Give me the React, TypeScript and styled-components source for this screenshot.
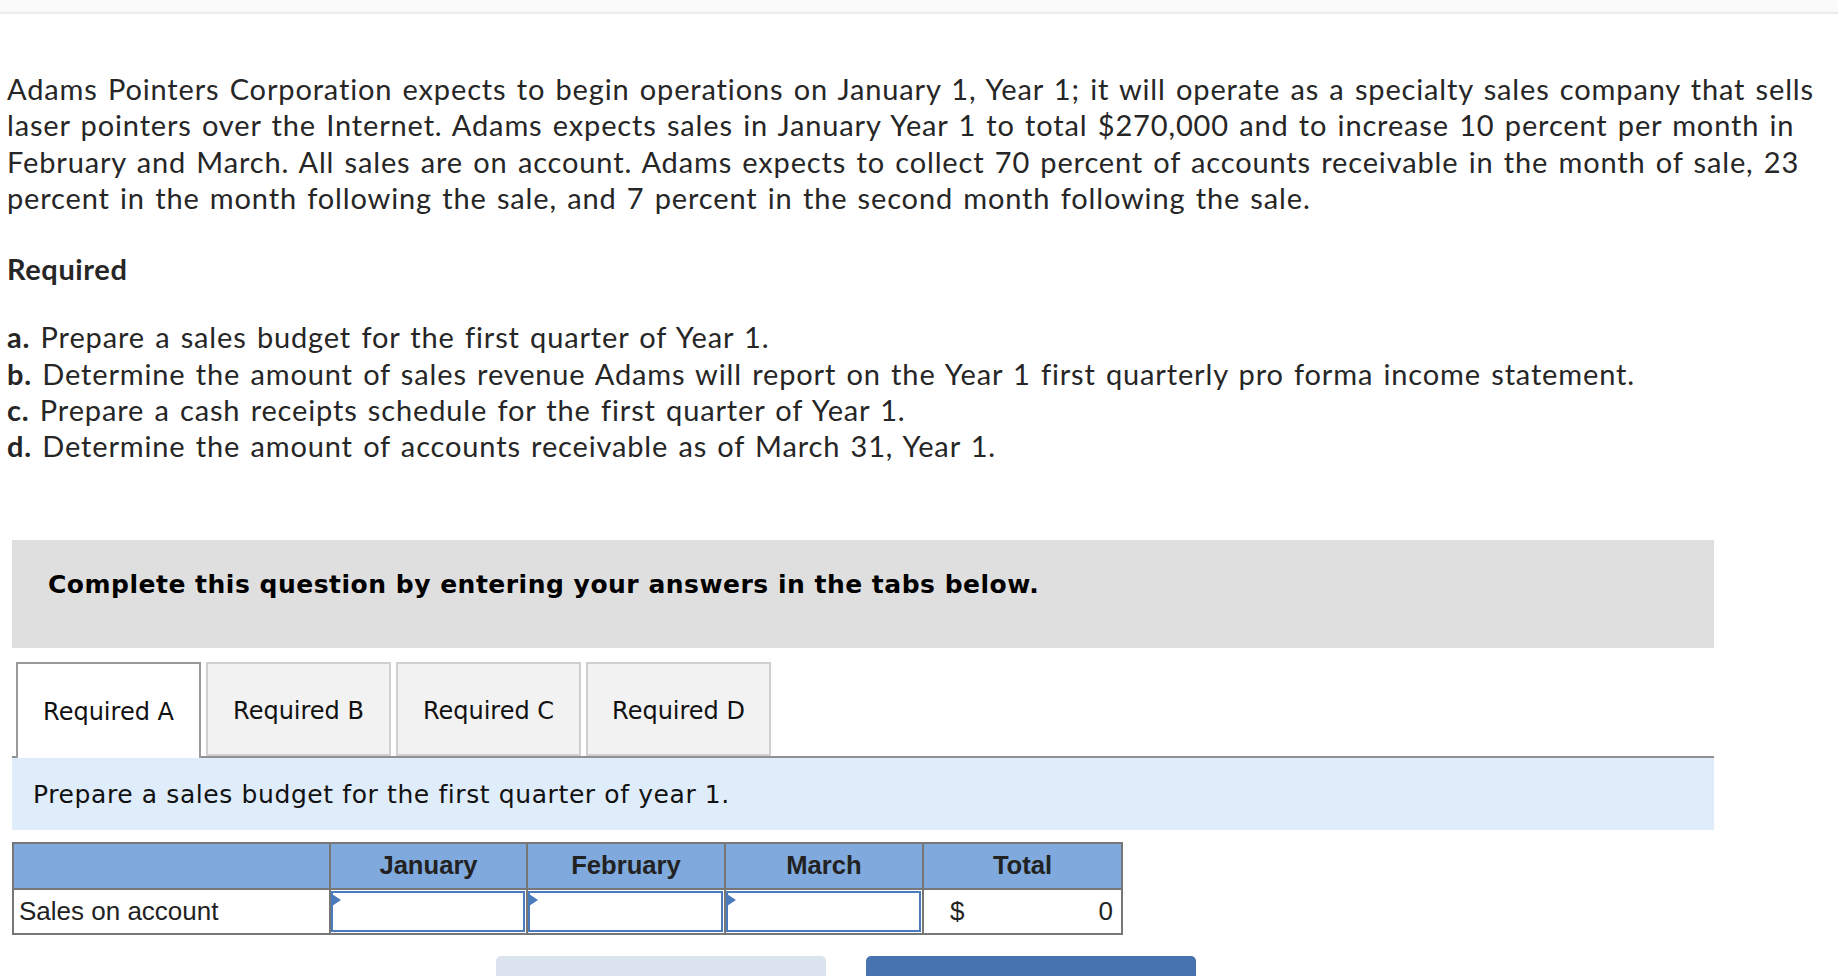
import React from "react"
import styled, { createGlobalStyle } from "styled-components"

const GlobalStyle = createGlobalStyle`
  body {
    margin: 0;
    background: #fff;
  }
`

const TopBar = styled.div`
  height: 12px;
  background: #fafafa;
  border-bottom: 2px solid #ececec;
`

const Question = styled.div`
  padding: 57px 0 0 7px;
  font-family: Lato, "Open Sans", sans-serif;
  font-size: 29px;
  letter-spacing: 0.85px;
  word-spacing: 2px;
  line-height: 36.3px;
  color: #262626;
`

const Intro = styled.p`
  margin: 0;
`

const RequiredTitle = styled.h3`
  margin: 35px 0 0;
  font-size: inherit;
  font-weight: 700;
  letter-spacing: 0.6px;
`

const TaskList = styled.ol`
  margin: 32px 0 0;
  padding: 0;
  list-style: none;
`

const Letter = styled.b`
  font-weight: 700;
`

const Work = styled.div`
  margin: 75px 0 0 12px;
  width: 1702px;
`

const Instructions = styled.div`
  height: 108px;
  box-sizing: border-box;
  background: #dfdfdf;
  padding: 30px 0 0 36px;
  line-height: 30px;
  font-family: "DejaVu Sans", Verdana, sans-serif;
  font-weight: 700;
  font-size: 25px;
  letter-spacing: 0.5px;
  color: #000;
`

const TabStrip = styled.div`
  margin-top: 14px;
  padding-left: 4px;
  display: flex;
  gap: 5px;
  border-bottom: 2px solid #909090;
  height: 94px;
`

const Tab = styled.button<{ $active?: boolean }>`
  width: 185px;
  height: ${p => (p.$active ? "96px" : "94px")};
  box-sizing: border-box;
  border: 2px solid ${p => (p.$active ? "#999" : "#cfcfcf")};
  border-bottom: ${p => (p.$active ? "none" : "2px solid #cfcfcf")};
  background: ${p => (p.$active ? "#fff" : "#f2f2f2")};
  font-family: "DejaVu Sans", Verdana, sans-serif;
  font-size: 24px;
  color: #111;
  padding: 4px 0 ${p => (p.$active ? "2px" : "0")};
  position: relative;
  z-index: ${p => (p.$active ? 1 : 0)};
`

const Panel = styled.div`
  height: 72px;
  box-sizing: border-box;
  background: #dfecf9;
  padding: 2px 0 0 21px;
  display: flex;
  align-items: center;
  font-family: "DejaVu Sans", Verdana, sans-serif;
  font-size: 25px;
  letter-spacing: 0.6px;
  color: #111;
`

const Grid = styled.div`
  margin-top: 12px;
  width: 1111px;
  box-sizing: border-box;
  display: grid;
  grid-template-columns: 315px 195px 196px 196px 197px;
  grid-template-rows: 44px 43px;
  gap: 2px;
  border: 2px solid #777;
  background: #777;
  font-family: "Liberation Sans", Arial, sans-serif;
  font-size: 26px;
  color: #222;
`

const HeadCell = styled.div`
  background: #80aadd;
  font-weight: 700;
  font-size: 25.6px;
  display: flex;
  align-items: center;
  justify-content: center;
`

const LabelCell = styled.div`
  background: #fff;
  display: flex;
  align-items: center;
  padding-left: 5px;
`

const InputCell = styled.div`
  background: #fff;
  padding: 1px 1px 1px 0;
`

const AmountInput = styled.div`
  position: relative;
  height: 100%;
  box-sizing: border-box;
  border: 2px solid #4a7bbd;
  &::before {
    content: "";
    position: absolute;
    left: -1px;
    top: 1px;
    border-left: 9px solid #4a7bbd;
    border-top: 6px solid transparent;
    border-bottom: 6px solid transparent;
  }
`

const TotalCell = styled.div`
  background: #fff;
  display: flex;
  align-items: center;
  justify-content: space-between;
  padding: 0 8px 0 26px;
`

const NavRow = styled.div`
  margin: 21px 0 0 484px;
  display: flex;
  gap: 40px;
`

const NavButton = styled.button<{ $primary?: boolean }>`
  width: 330px;
  height: 56px;
  border: none;
  border-radius: 5px;
  background: ${p => (p.$primary ? "#4774b0" : "#dae3ee")};
`

const tabs = ["Required A", "Required B", "Required C", "Required D"]
const months = ["January", "February", "March"]

const App: React.FC = () => (
  <>
    <GlobalStyle />
    <TopBar />
    <Question>
      <Intro>
        Adams Pointers Corporation expects to begin operations on January 1, Year 1; it will operate as a specialty sales company that sells laser pointers over the Internet. Adams expects sales in January Year 1 to total $270,000 and to increase 10 percent per month in February and March. All sales are on account. Adams expects to collect 70 percent of accounts receivable in the month of sale, 23 percent in the month following the sale, and 7 percent in the second month following the sale.
      </Intro>
      <RequiredTitle>Required</RequiredTitle>
      <TaskList>
        <li><Letter>a.</Letter> Prepare a sales budget for the first quarter of Year 1.</li>
        <li><Letter>b.</Letter> Determine the amount of sales revenue Adams will report on the Year 1 first quarterly pro forma income statement.</li>
        <li><Letter>c.</Letter> Prepare a cash receipts schedule for the first quarter of Year 1.</li>
        <li><Letter>d.</Letter> Determine the amount of accounts receivable as of March 31, Year 1.</li>
      </TaskList>
    </Question>
    <Work>
      <Instructions>Complete this question by entering your answers in the tabs below.</Instructions>
      <TabStrip>
        {tabs.map((t, i) => (
          <Tab key={t} $active={i === 0}>{t}</Tab>
        ))}
      </TabStrip>
      <Panel>Prepare a sales budget for the first quarter of year 1.</Panel>
      <Grid>
        <HeadCell />
        {months.map(m => <HeadCell key={m}>{m}</HeadCell>)}
        <HeadCell>Total</HeadCell>
        <LabelCell>Sales on account</LabelCell>
        {months.map(m => (
          <InputCell key={m}><AmountInput /></InputCell>
        ))}
        <TotalCell><span>$</span><span>0</span></TotalCell>
      </Grid>
      <NavRow>
        <NavButton aria-label="Previous" />
        <NavButton $primary aria-label="Next" />
      </NavRow>
    </Work>
  </>
)

export default App
